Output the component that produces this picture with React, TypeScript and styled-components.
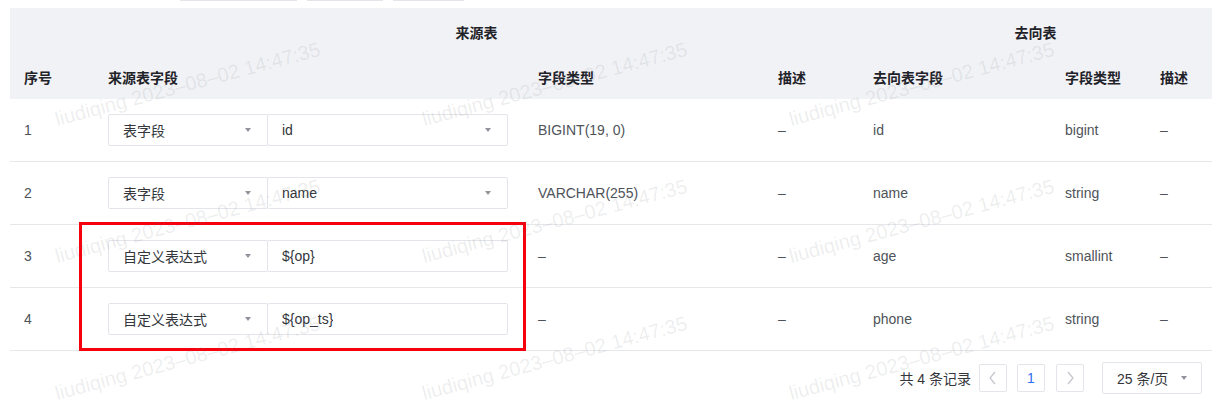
import { createGlobalStyle } from 'styled-components';
import styled from 'styled-components';

interface Mapping {
  id: number;
  kind: string;
  source: string;
  sourceIsSelect: boolean;
  sourceType: string;
  target: string;
  targetType: string;
}

const rows: Mapping[] = [
  { id: 1, kind: '表字段', source: 'id', sourceIsSelect: true, sourceType: 'BIGINT(19, 0)', target: 'id', targetType: 'bigint' },
  { id: 2, kind: '表字段', source: 'name', sourceIsSelect: true, sourceType: 'VARCHAR(255)', target: 'name', targetType: 'string' },
  { id: 3, kind: '自定义表达式', source: '${op}', sourceIsSelect: false, sourceType: '–', target: 'age', targetType: 'smallint' },
  { id: 4, kind: '自定义表达式', source: '${op_ts}', sourceIsSelect: false, sourceType: '–', target: 'phone', targetType: 'string' },
];

// watermark tiles: left / baseline
const marks: [number, number][] = [];
[58, 425, 792].forEach((x) => {
  [129, 266, 403].forEach((y) => marks.push([x, y]));
});

const colWidths = [84, 430, 240, 95, 192, 95, 66];

const App = () => {
  return (
    <Page>
      <GlobalStyle />
      <TopStrip>
        <TopSeg $w={117} />
        <TopSeg $w={76} />
        <TopSeg $w={71} />
      </TopStrip>
      <Table>
        <colgroup>
          {colWidths.map((w, i) => (
            <col key={i} style={{ width: w }} />
          ))}
        </colgroup>
        <thead>
          <tr>
            <HeadCell />
            <HeadCell colSpan={3} $center>
              来源表
            </HeadCell>
            <HeadCell colSpan={3} $center>
              去向表
            </HeadCell>
          </tr>
          <tr>
            <HeadCell>序号</HeadCell>
            <HeadCell>来源表字段</HeadCell>
            <HeadCell>字段类型</HeadCell>
            <HeadCell>描述</HeadCell>
            <HeadCell>去向表字段</HeadCell>
            <HeadCell>字段类型</HeadCell>
            <HeadCell>描述</HeadCell>
          </tr>
        </thead>
        <tbody>
          {rows.map((r) => (
            <tr key={r.id}>
              <Cell>{r.id}</Cell>
              <Cell $right={16}>
                <FieldGroup>
                  <Field $width={160}>
                    <FieldText>{r.kind}</FieldText>
                    <Caret />
                  </Field>
                  <Field $joined>
                    <FieldText>{r.source}</FieldText>
                    {r.sourceIsSelect && <Caret />}
                  </Field>
                </FieldGroup>
              </Cell>
              <Cell>{r.sourceType}</Cell>
              <Cell>–</Cell>
              <Cell>{r.target}</Cell>
              <Cell>{r.targetType}</Cell>
              <Cell>–</Cell>
            </tr>
          ))}
        </tbody>
      </Table>

      <Pager>
        <Total>共 4 条记录</Total>
        <PageBtn $gap={8}>
          <svg width="10" height="14" viewBox="0 0 10 14">
            <polyline points="7,1 2,7 7,13" fill="none" stroke="#c2c5cc" strokeWidth="1.2" />
          </svg>
        </PageBtn>
        <PageBtn $gap={10} $active>
          1
        </PageBtn>
        <PageBtn $gap={11}>
          <svg width="10" height="14" viewBox="0 0 10 14">
            <polyline points="3,1 8,7 3,13" fill="none" stroke="#c2c5cc" strokeWidth="1.2" />
          </svg>
        </PageBtn>
        <SizeSelect>
          <span>25 条/页</span>
          <Caret />
        </SizeSelect>
      </Pager>

      <Annotation />

      <Watermarks>
        {marks.map(([x, y], i) => (
          <Mark key={i} style={{ left: x, top: y - 20 }}>
            liudiqing 2023–08–02 14:47:35
          </Mark>
        ))}
      </Watermarks>
    </Page>
  );
};

export default App;

const GlobalStyle = createGlobalStyle`
  body {
    margin: 0;
    background: #ffffff;
    font-family: "Helvetica Neue", "Liberation Sans", "Noto Sans CJK SC", sans-serif;
    font-size: 14px;
    color: #4e5359;
  }
`;

const Page = styled.div`
  position: relative;
  width: 1222px;
  height: 402px;
  padding: 0 10px;
  box-sizing: border-box;
  overflow: hidden;
`;

const TopStrip = styled.div`
  display: flex;
  gap: 10px;
  height: 8px;
  padding-left: 170px;
`;

const TopSeg = styled.div<{ $w: number }>`
  width: ${(p) => p.$w}px;
  height: 1px;
  background: #e4e5ea;
`;

const Table = styled.table`
  width: 1202px;
  border-collapse: collapse;
  table-layout: fixed;
`;

const HeadCell = styled.th<{ $center?: boolean }>`
  height: 45px;
  padding: 0 14px;
  background: #f1f2f5;
  color: #1f2329;
  font-weight: 600;
  font-size: 14px;
  text-align: ${(p) => (p.$center ? 'center' : 'left')};
  white-space: nowrap;

  tr:first-child > & {
    padding-top: 1px;
  }
`;

const Cell = styled.td<{ $right?: number }>`
  height: 62px;
  padding: 0 ${(p) => p.$right ?? 14}px 0 14px;
  border-bottom: 1px solid #e6e7eb;
  color: #4e5359;
  white-space: nowrap;
`;

const FieldGroup = styled.div`
  display: flex;
  width: 400px;
`;

const Field = styled.div<{ $width?: number; $joined?: boolean }>`
  display: flex;
  align-items: center;
  justify-content: space-between;
  box-sizing: border-box;
  height: 32px;
  padding: 0 16px 0 14px;
  border: 1px solid #e3e5ea;
  border-radius: 2px;
  background: #ffffff;
  color: #33363b;
  ${(p) => (p.$width ? `width: ${p.$width}px; flex: none;` : 'flex: 1;')}
  ${(p) => (p.$joined ? 'margin-left: -1px;' : '')}
`;

const FieldText = styled.span`
  overflow: hidden;
  text-overflow: ellipsis;
`;

const Caret = styled.i`
  width: 0;
  height: 0;
  border-left: 3.5px solid transparent;
  border-right: 3.5px solid transparent;
  border-top: 4px solid #8f949c;
`;

const Pager = styled.div`
  display: flex;
  justify-content: flex-end;
  align-items: center;
  margin-top: 11px;
  padding-right: 10px;
  height: 32px;
`;

const Total = styled.span`
  color: #33363b;
`;

const PageBtn = styled.div<{ $gap: number; $active?: boolean }>`
  display: flex;
  align-items: center;
  justify-content: center;
  box-sizing: border-box;
  width: 28px;
  height: 28px;
  margin-left: ${(p) => p.$gap}px;
  border: 1px solid #e3e5ea;
  border-radius: 2px;
  color: ${(p) => (p.$active ? '#2f6fed' : '#33363b')};
`;

const SizeSelect = styled.div`
  display: flex;
  align-items: center;
  justify-content: space-between;
  box-sizing: border-box;
  width: 100px;
  height: 32px;
  margin-left: 18px;
  padding: 0 14px 0 14px;
  border: 1px solid #e3e5ea;
  border-radius: 2px;
  color: #33363b;
`;

const Annotation = styled.div`
  position: absolute;
  left: 79px;
  top: 222px;
  width: 447px;
  height: 129px;
  box-sizing: border-box;
  border: 3px solid #f7000d;
  pointer-events: none;
`;

const Watermarks = styled.div`
  position: absolute;
  inset: 0;
  pointer-events: none;
  overflow: hidden;
`;

const Mark = styled.span`
  position: absolute;
  font-family: "Helvetica Neue", "Liberation Sans", sans-serif;
  font-size: 20px;
  line-height: 1;
  white-space: nowrap;
  color: rgba(110, 115, 125, 0.12);
  transform: rotate(-15deg);
  transform-origin: 0 100%;
`;
